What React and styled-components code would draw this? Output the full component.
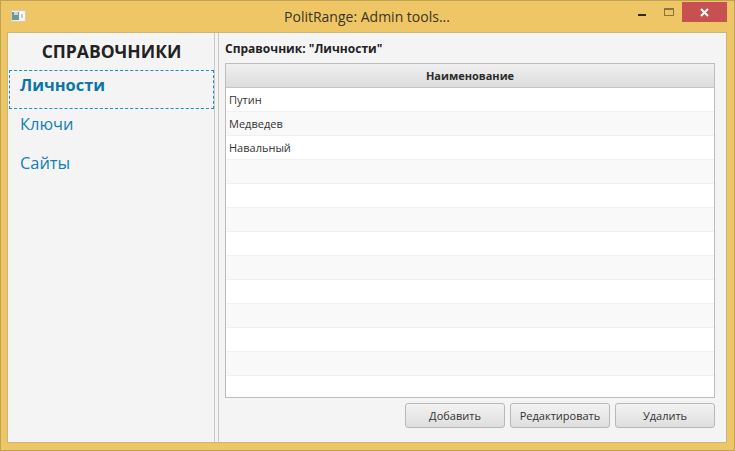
import React from "react";
import styled, { createGlobalStyle } from "styled-components";

const GlobalStyle = createGlobalStyle`
  html, body {
    margin: 0;
    padding: 0;
    width: 735px;
    height: 451px;
    overflow: hidden;
    background: #efc666;
  }
  * { box-sizing: border-box; }
`;

const rows = ["Путин", "Медведев", "Навальный", "", "", "", "", "", "", "", "", "", ""];
const links = ["Ключи", "Сайты"];

const AppIcon = () => (
  <svg width="15" height="12" viewBox="0 0 15 12">
    <rect x="0" y="0" width="15" height="12" fill="#d8cfae" />
    <rect x="1" y="1" width="13" height="10" fill="#eeeeea" />
    <rect x="1" y="2" width="7" height="8" fill="#6f9a94" />
    <rect x="3" y="2" width="4" height="3" fill="#c2dada" />
    <rect x="9" y="2" width="5" height="8" fill="#f7f7f7" />
    <rect x="10" y="4" width="2" height="4" fill="#c3cacd" />
  </svg>
);

export default function App() {
  return (
    <>
      <GlobalStyle />
      <Window>
        <TitleBar>
          <IconSlot>
            <AppIcon />
          </IconSlot>
          <Title>PolitRange: Admin tools...</Title>
          <Controls>
            <MinButton>
              <MinGlyph />
            </MinButton>
            <MaxButton>
              <MaxGlyph />
            </MaxButton>
            <CloseButton>
              <svg width="9" height="9" viewBox="0 0 9 9">
                <path d="M1 1L8 8M8 1L1 8" stroke="#fff" strokeWidth="2" />
              </svg>
            </CloseButton>
          </Controls>
        </TitleBar>
        <Client>
          <Sidebar>
            <SidebarTitle>СПРАВОЧНИКИ</SidebarTitle>
            <ActiveLink>Личности</ActiveLink>
            {links.map((link) => (
              <NavLink key={link}>{link}</NavLink>
            ))}
          </Sidebar>
          <Divider />
          <Content>
            <Heading>Справочник: "Личности"</Heading>
            <Table>
              <TableHeader>Наименование</TableHeader>
              {rows.map((row, index) => (
                <Row key={index} $odd={index % 2 === 1}>
                  {row}
                </Row>
              ))}
            </Table>
            <Actions>
              <ActionButton>Добавить</ActionButton>
              <ActionButton>Редактировать</ActionButton>
              <ActionButton>Удалить</ActionButton>
            </Actions>
          </Content>
        </Client>
      </Window>
    </>
  );
}

const Window = styled.div`
  width: 735px;
  height: 451px;
  display: flex;
  flex-direction: column;
  padding: 1px 7px 7px 6px;
  background: #efc666;
  border: 1px solid #bfa257;
  font-family: "Open Sans", "Noto Sans", sans-serif;
`;

const TitleBar = styled.div`
  height: 30px;
  flex: none;
  display: flex;
  align-items: flex-start;
  position: relative;
`;

const IconSlot = styled.div`
  display: flex;
  margin: 8px 0 0 4px;
`;

const Title = styled.div`
  position: absolute;
  left: 0;
  right: 0;
  top: 5px;
  text-align: center;
  font-family: "Open Sans", sans-serif;
  font-size: 14px;
  line-height: 19px;
  color: #3a3422;
`;

const Controls = styled.div`
  margin-left: auto;
  display: flex;
  align-items: flex-start;
  position: relative;
`;

const MinButton = styled.div`
  width: 25px;
  height: 20px;
  display: flex;
  justify-content: center;
  padding: 12px 3px 0 0;
`;

const MinGlyph = styled.div`
  width: 8px;
  height: 2px;
  background: #33291a;
`;

const MaxButton = styled.div`
  width: 26px;
  height: 20px;
  display: flex;
  justify-content: center;
  padding-top: 6px;
`;

const MaxGlyph = styled.div`
  width: 10px;
  height: 8px;
  border: 1px solid #8b743c;
  border-top-width: 2px;
`;

const CloseButton = styled.div`
  width: 45px;
  height: 20px;
  display: flex;
  align-items: center;
  justify-content: center;
  background: #c75050;
`;

const Client = styled.div`
  flex: 1;
  display: flex;
  background: #f4f4f4;
  border: 1px solid #c9b67f;
`;

const Sidebar = styled.div`
  width: 206px;
  flex: none;
  display: flex;
  flex-direction: column;
  padding: 3px 0 0 1px;
`;

const SidebarTitle = styled.div`
  height: 34px;
  text-align: center;
  font-size: 17.5px;
  line-height: 30px;
  font-weight: 700;
  color: #222;
`;

const NavLink = styled.div`
  height: 39px;
  padding: 3px 11px 0;
  font-size: 16.4px;
  line-height: 24px;
  color: #0f81b5;
`;

const ActiveLink = styled(NavLink)`
  border: 1px dashed #1f8fb8;
  padding: 2px 10px 0;
  font-weight: 700;
  color: #0a76a8;
`;

const Divider = styled.div`
  width: 5px;
  flex: none;
  border-left: 1px solid #c8c8c8;
  border-right: 1px solid #c8c8c8;
  background: #f4f4f4;
`;

const Content = styled.div`
  flex: 1;
  display: flex;
  flex-direction: column;
  padding: 7px 11px 0 6px;
`;

const Heading = styled.div`
  height: 23px;
  font-size: 12px;
  line-height: 18px;
  font-weight: 700;
  color: #222;
`;

const Table = styled.div`
  height: 335px;
  flex: none;
  overflow: hidden;
  display: flex;
  flex-direction: column;
  background: #fff;
  border: 1px solid #bdbdbd;
`;

const TableHeader = styled.div`
  height: 24px;
  flex: none;
  text-align: center;
  font-size: 11px;
  line-height: 23px;
  font-weight: 700;
  color: #2b2b2b;
  background: linear-gradient(#f0f0f0, #dcdcdc);
  border-bottom: 1px solid #c4c4c4;
`;

const Row = styled.div`
  height: 24px;
  flex: none;
  padding-left: 3px;
  font-size: 11px;
  line-height: 23px;
  color: #333;
  background: ${(p) => (p.$odd ? "#f9f9f9" : "#fff")};
  border-bottom: 1px solid #f0f0f0;
`;

const Actions = styled.div`
  display: flex;
  justify-content: flex-end;
  gap: 5px;
  margin-top: 5px;
`;

const ActionButton = styled.div`
  width: 100px;
  height: 25px;
  text-align: center;
  font-size: 11px;
  line-height: 24px;
  color: #333;
  border: 1px solid #b8b8b8;
  border-radius: 3px;
  background: linear-gradient(#f3f3f3, #dedede);
`;
